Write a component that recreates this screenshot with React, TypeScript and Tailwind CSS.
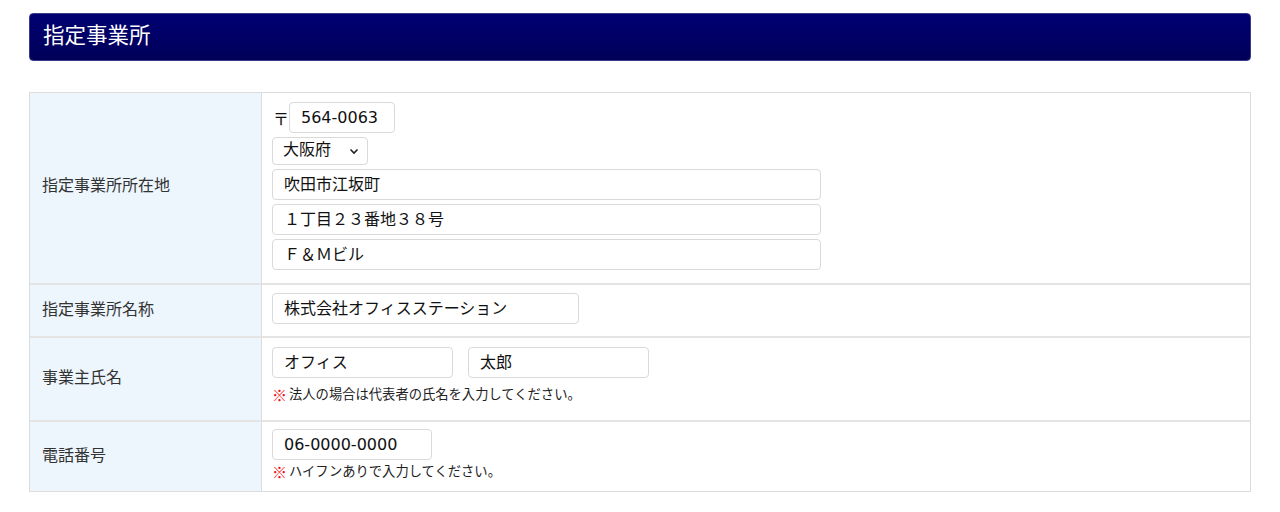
import React from "react";

const font = { fontFamily: '"DejaVu Sans", "Noto Sans CJK JP", sans-serif' };
const cjk = { fontFamily: '"Noto Sans CJK JP", sans-serif' };

function Field({ w, value, className = "" }: { w: string; value: string; className?: string }) {
  return (
    <div
      className={`${w} h-[31px] shrink-0 rounded-[4px] border border-[#d9d9d9] bg-white pl-[11px] flex items-center text-[16px] text-[#111] ${className}`}
    >
      <span>{value}</span>
    </div>
  );
}

function Note({ children }: { children: React.ReactNode }) {
  return (
    <div className="text-[13.3px] text-[#222] leading-[18px] flex items-center">
      <span className="text-[#ee1111] font-black mr-[2px] text-[15px] leading-[18px]" style={cjk}>※</span>
      {children}
    </div>
  );
}

export default function App() {
  return (
    <div className="w-[1280px] h-[512px] bg-white px-[29px] pt-[13px]" style={font}>
      <div className="w-[1222px] h-[48px] rounded-[4px] border border-[#3a3a8a] bg-gradient-to-b from-[#000074] to-[#000058] flex items-center pl-[13px] text-white text-[21.5px]">
        <span className="-mt-[2px]">指定事業所</span>
      </div>
      <div className="mt-[31px] w-[1222px] border border-[#dcdcdc] grid grid-cols-[232px_1fr] text-[16px] text-[#333]">
        {/* Row 1 */}
        <div className="bg-[#edf5fd] border-r border-[#dcdcdc] flex items-center pl-[12px] h-[190px]">
          <span className="-mt-[4px]">指定事業所所在地</span>
        </div>
        <div className="pl-[10px] pt-[9px] flex flex-col gap-[4px]">
          <div className="flex items-center">
            <span className="text-[16px] text-[#111] w-[17px] pl-[1px]" style={cjk}>〒</span>
            <Field w="w-[106px]" value="564-0063" />
          </div>
          <div className="w-[96px] h-[28px] rounded-[4px] border border-[#d9d9d9] bg-white pl-[10px] pr-[8px] flex items-center justify-between text-[16px] text-[#111]">
            <span className="-mt-[2px]">大阪府</span>
            <svg width="10" height="7" viewBox="0 0 10 7" fill="none">
              <path d="M1.5 1.5 L5 5 L8.5 1.5" stroke="#222" strokeWidth="1.6" />
            </svg>
          </div>
          <Field w="w-[549px]" value="吹田市江坂町" />
          <Field w="w-[549px]" value="１丁目２３番地３８号" />
          <Field w="w-[549px]" value="Ｆ＆Ｍビル" />
        </div>
        {/* Row 2 */}
        <div className="bg-[#edf5fd] border-r border-t-2 border-t-[#e4e4e4] border-r-[#dcdcdc] flex items-center pl-[12px] h-[53px]">
          <span className="-mt-[2px]">指定事業所名称</span>
        </div>
        <div className="border-t-2 border-[#e4e4e4] pl-[10px] pt-[8px]">
          <Field w="w-[307px]" value="株式会社オフィスステーション" />
        </div>
        {/* Row 3 */}
        <div className="bg-[#edf5fd] border-r border-t-2 border-t-[#e4e4e4] border-r-[#dcdcdc] flex items-center pl-[12px] h-[84px]">
          <span className="-mt-[2px]">事業主氏名</span>
        </div>
        <div className="border-t-2 border-[#e4e4e4] pl-[10px] pt-[9px] flex flex-col gap-[8px]">
          <div className="flex gap-[15px]">
            <Field w="w-[181px]" value="オフィス" />
            <Field w="w-[181px]" value="太郎" />
          </div>
          <Note>法人の場合は代表者の氏名を入力してください。</Note>
        </div>
        {/* Row 4 */}
        <div className="bg-[#edf5fd] border-r border-t-2 border-t-[#e4e4e4] border-r-[#dcdcdc] flex items-center pl-[12px] h-[71px]">
          <span className="-mt-[2px]">電話番号</span>
        </div>
        <div className="border-t-2 border-[#e4e4e4] pl-[10px] pt-[7px] flex flex-col gap-[3px]">
          <Field w="w-[160px]" value="06-0000-0000" />
          <Note>ハイフンありで入力してください。</Note>
        </div>
      </div>
    </div>
  );
}
